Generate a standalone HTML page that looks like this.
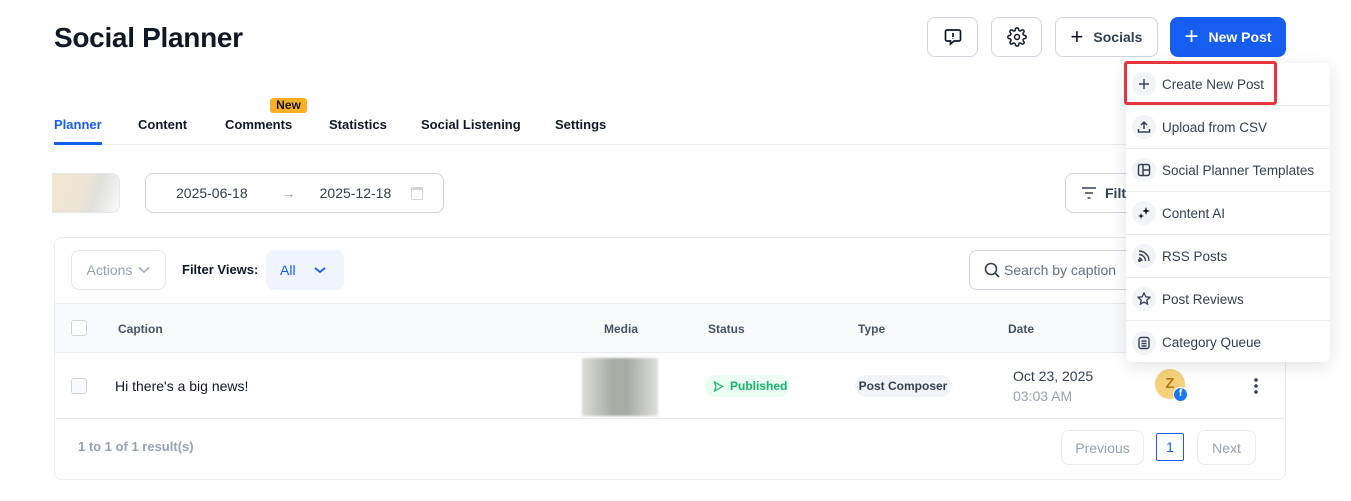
<!DOCTYPE html>
<html><head><style>
*{box-sizing:border-box;margin:0;padding:0}
body{width:1351px;height:501px;background:#fff;font-family:"Liberation Sans",sans-serif;color:#101828;position:relative;overflow:hidden}
.a{position:absolute}
.btn{position:absolute;border:1px solid #d0d5dd;border-radius:8px;background:#fff;display:flex;align-items:center;justify-content:center}
.tab{position:absolute;top:117px;font-size:13px;font-weight:bold;color:#101828}
.th{position:absolute;top:322px;font-size:12px;font-weight:bold;color:#475467}
.mi{position:absolute;left:1126px;width:204px;height:43px;display:flex;align-items:center;font-size:13.5px;color:#344054;border-bottom:1px solid #eaecf0}
.ic{width:24px;height:24px;border-radius:12px;background:#f2f4f7;margin:0 6px 0 6px;display:flex;align-items:center;justify-content:center}
</style></head><body>
<div class="a" style="left:54px;top:22px;font-size:28px;font-weight:bold;color:#101828;letter-spacing:-0.3px">Social Planner</div>

<div class="btn" style="left:927px;top:17px;width:51px;height:40px"><svg width="20" height="20" viewBox="0 0 20 20" fill="none" stroke="#101828" stroke-width="1.7"><path d="M4 3h12a1.5 1.5 0 0 1 1.5 1.5v8A1.5 1.5 0 0 1 16 14h-5l-3.5 3v-3H4a1.5 1.5 0 0 1-1.5-1.5v-8A1.5 1.5 0 0 1 4 3z"/><path d="M10 6v4M10 11.5v.5"/></svg></div>
<div class="btn" style="left:991px;top:17px;width:51px;height:40px"><svg width="20" height="20" viewBox="0 0 24 24" fill="none" stroke="#101828" stroke-width="1.8"><circle cx="12" cy="12" r="3"/><path d="M19.4 15a1.7 1.7 0 0 0 .3 1.8l.1.1a2 2 0 1 1-2.8 2.8l-.1-.1a1.7 1.7 0 0 0-1.8-.3 1.7 1.7 0 0 0-1 1.5V21a2 2 0 1 1-4 0v-.1a1.7 1.7 0 0 0-1.1-1.5 1.7 1.7 0 0 0-1.8.3l-.1.1a2 2 0 1 1-2.8-2.8l.1-.1a1.7 1.7 0 0 0 .3-1.8 1.7 1.7 0 0 0-1.5-1H3a2 2 0 1 1 0-4h.1a1.7 1.7 0 0 0 1.5-1.1 1.7 1.7 0 0 0-.3-1.8l-.1-.1a2 2 0 1 1 2.8-2.8l.1.1a1.7 1.7 0 0 0 1.8.3H9a1.7 1.7 0 0 0 1-1.5V3a2 2 0 1 1 4 0v.1a1.7 1.7 0 0 0 1 1.5 1.7 1.7 0 0 0 1.8-.3l.1-.1a2 2 0 1 1 2.8 2.8l-.1.1a1.7 1.7 0 0 0-.3 1.8V9a1.7 1.7 0 0 0 1.5 1H21a2 2 0 1 1 0 4h-.1a1.7 1.7 0 0 0-1.5 1z"/></svg></div>
<div class="btn" style="left:1055px;top:17px;width:103px;height:40px;font-size:14px;font-weight:bold;color:#344054"><span style="font-size:22px;font-weight:normal;margin-right:10px;color:#101828">+</span>Socials</div>
<div class="btn" style="left:1170px;top:17px;width:116px;height:40px;background:#155eef;border-color:#155eef;color:#fff;font-size:14px;font-weight:bold"><span style="font-size:24px;font-weight:normal;margin-right:10px">+</span>New Post</div>

<div class="a" style="left:270px;top:98px;width:37px;height:15px;background:#fdb022;border-radius:3px;font-size:12px;font-weight:bold;text-align:center;line-height:15px;color:#101828">New</div>
<div class="tab" style="left:54px;color:#155eef">Planner</div>
<div class="tab" style="left:138px">Content</div>
<div class="tab" style="left:225px">Comments</div>
<div class="tab" style="left:329px">Statistics</div>
<div class="tab" style="left:421px">Social Listening</div>
<div class="tab" style="left:555px">Settings</div>
<div class="a" style="left:54px;top:144px;width:1232px;height:1px;background:#eaecf0"></div>
<div class="a" style="left:54px;top:142px;width:48px;height:3px;background:#155eef"></div>

<div class="a" style="left:52px;top:173px;width:68px;height:40px;border-radius:0 8px 8px 0;border:1px solid #e4e7ec;border-left:none;background:linear-gradient(110deg,#f2e6cf 0%,#ece4d5 45%,#e0e0dc 65%,#fafafa 100%)"></div>
<div class="btn" style="left:145px;top:173px;width:299px;height:40px;justify-content:flex-start;font-size:14px;color:#344054"><span style="margin-left:30px">2025-06-18</span><span style="margin-left:34px;color:#98a2b3">→</span><span style="margin-left:24px">2025-12-18</span><span style="margin-left:20px;width:12px;height:13px;border:1.5px solid #d0d5dd;border-radius:2px;border-top-width:3px"></span></div>
<div class="btn" style="left:1065px;top:173px;width:80px;height:40px;justify-content:flex-start;font-size:14px;font-weight:bold;color:#344054"><svg style="margin:0 8px 0 15px" width="16" height="12" viewBox="0 0 16 12"><path d="M1 1h14M4 6h8M6.5 11h3" stroke="#344054" stroke-width="1.6"/></svg>Filte</div>

<div class="a" style="left:54px;top:237px;width:1232px;height:243px;border:1px solid #eaecf0;border-radius:8px"></div>
<div class="btn" style="left:71px;top:250px;width:95px;height:40px;font-size:14px;color:#98a2b3;border-color:#e4e7ec">Actions<svg style="margin-left:6px" width="12" height="8" viewBox="0 0 12 8"><path d="M1 1.5l5 4.5 5-4.5" fill="none" stroke="#98a2b3" stroke-width="1.5"/></svg></div>
<div class="a" style="left:182px;top:262px;font-size:13px;font-weight:bold">Filter Views:</div>
<div class="a" style="left:266px;top:250px;width:78px;height:40px;border-radius:8px;background:#eff4ff;font-size:14px;color:#155eef;padding:12px 0 0 14px">All<svg style="position:absolute;left:48px;top:15px" width="12" height="10" viewBox="0 0 12 10"><path d="M1 3l5 4 5-4" fill="none" stroke="#155eef" stroke-width="1.8"/></svg></div>
<div class="btn" style="left:969px;top:250px;width:200px;height:40px;justify-content:flex-start;font-size:14px;color:#667085"><svg style="margin:0 4px 0 14px" width="16" height="16" viewBox="0 0 16 16" fill="none" stroke="#344054" stroke-width="1.6"><circle cx="7" cy="7" r="5.5"/><path d="M11 11l4 4"/></svg>Search by caption</div>

<div class="a" style="left:55px;top:303px;width:1230px;height:50px;background:#f9fafb;border-top:1px solid #eaecf0;border-bottom:1px solid #eaecf0"></div>
<div class="a" style="left:71px;top:320px;width:16px;height:16px;border:1px solid #d0d5dd;border-radius:3px;background:#fff"></div>
<div class="th" style="left:118px">Caption</div>
<div class="th" style="left:604px">Media</div>
<div class="th" style="left:708px">Status</div>
<div class="th" style="left:858px">Type</div>
<div class="th" style="left:1008px">Date</div>

<div class="a" style="left:71px;top:378px;width:16px;height:16px;border:1px solid #d0d5dd;border-radius:3px;background:#f9fafb"></div>
<div class="a" style="left:115px;top:378px;font-size:14px">Hi there's a big news!</div>
<div class="a" style="left:582px;top:358px;width:76px;height:58px;background:linear-gradient(90deg,#dcdcd8,#a6ada4 40%,#a8aca6 60%,#dedede);filter:blur(1px)"></div>
<div class="a" style="left:705px;top:375px;width:85px;height:22px;border-radius:11px;background:#ecfdf3;color:#12b76a;font-size:12px;font-weight:bold;line-height:22px;padding-left:25px">Published<svg style="position:absolute;left:8px;top:6px" width="11" height="11" viewBox="0 0 11 11"><path d="M1.5 1l8 4.5-8 4.5 1.5-4.5z" fill="none" stroke="#12b76a" stroke-width="1.2"/></svg></div>
<div class="a" style="left:855px;top:375px;width:96px;height:22px;border-radius:11px;background:#f2f4f7;font-size:12px;font-weight:bold;line-height:22px;text-align:center;color:#344054">Post Composer</div>
<div class="a" style="left:1013px;top:368px;font-size:14px;color:#344054">Oct 23, 2025</div>
<div class="a" style="left:1013px;top:388px;font-size:14px;color:#98a2b3">03:03 AM</div>
<div class="a" style="left:1155px;top:369px;width:30px;height:30px;border-radius:15px;background:#f5d27a;color:#b7791f;font-weight:bold;font-size:15px;text-align:center;line-height:30px">Z</div>
<div class="a" style="left:1173px;top:387px;width:15px;height:15px;border-radius:8px;background:#1877f2;border:1.5px solid #fff;color:#fff;font-size:10px;font-weight:bold;text-align:center;line-height:12px">f</div>
<div class="a" style="left:1254px;top:377px;width:4px;height:18px;background:radial-gradient(circle,#344054 1.6px,transparent 2px) 0 0/4px 6px"></div>

<div class="a" style="left:55px;top:418px;width:1230px;height:1px;background:#eaecf0"></div>
<div class="a" style="left:78px;top:439px;font-size:13px;font-weight:bold;color:#98a2b3">1 to 1 of 1 result(s)</div>
<div class="btn" style="left:1061px;top:430px;width:83px;height:35px;font-size:14px;color:#98a2b3;border-color:#eaecf0">Previous</div>
<div class="btn" style="left:1156px;top:433px;width:28px;height:28px;border-radius:2px;border-color:#155eef;font-size:14px;color:#155eef">1</div>
<div class="btn" style="left:1197px;top:430px;width:59px;height:35px;font-size:14px;color:#98a2b3;border-color:#eaecf0">Next</div>

<div class="a" style="left:1126px;top:63px;width:204px;height:299px;background:#fff;border-radius:6px;box-shadow:0 4px 16px rgba(16,24,40,.12)"></div>
<div class="mi" style="top:63px">
<div class="ic"><svg width="12" height="12" viewBox="0 0 12 12"><path d="M6 1v10M1 6h10" stroke="#344054" stroke-width="1.4"/></svg></div>Create New Post</div>
<div class="a" style="left:1124px;top:61px;width:153px;height:44px;border:3px solid #e5363d;border-radius:3px"></div>
<div class="mi" style="top:106px"><div class="ic"><svg width="14" height="14" viewBox="0 0 14 14" fill="none" stroke="#344054" stroke-width="1.5"><path d="M7 9V2M4 5l3-3 3 3M1.5 9v3h11V9"/></svg></div>Upload from CSV</div>
<div class="mi" style="top:149px"><div class="ic"><svg width="14" height="14" viewBox="0 0 14 14" fill="none" stroke="#344054" stroke-width="1.5"><rect x="1.5" y="1.5" width="11" height="11" rx="2"/><path d="M6 1.5v11M6 7h6.5"/></svg></div>Social Planner Templates</div>
<div class="mi" style="top:192px"><div class="ic"><svg width="14" height="14" viewBox="0 0 14 14" fill="#101828"><path d="M9 1l1 3 3 1-3 1-1 3-1-3-3-1 3-1zM4 7l.8 2.2L7 10l-2.2.8L4 13l-.8-2.2L1 10l2.2-.8z"/></svg></div>Content AI</div>
<div class="mi" style="top:235px"><div class="ic"><svg width="14" height="14" viewBox="0 0 14 14" fill="none" stroke="#344054" stroke-width="1.4"><path d="M2 2a10 10 0 0 1 10 10M2 5.5A6.5 6.5 0 0 1 8.5 12M2 9a3 3 0 0 1 3 3"/><circle cx="2.5" cy="11.5" r=".8" fill="#344054"/></svg></div>RSS Posts</div>
<div class="mi" style="top:278px"><div class="ic"><svg width="14" height="14" viewBox="0 0 14 14" fill="none" stroke="#344054" stroke-width="1.3"><path d="M7 1l1.8 3.8 4 .5-3 2.8.8 4L7 10.1 3.4 12.1l.8-4-3-2.8 4-.5z"/></svg></div>Post Reviews</div>
<div class="mi" style="top:321px;border-bottom:none"><div class="ic"><svg width="14" height="14" viewBox="0 0 14 14" fill="none" stroke="#344054" stroke-width="1.4"><rect x="2" y="1.5" width="10" height="11" rx="2"/><path d="M4.5 5h5M4.5 7.5h5M4.5 10h5"/></svg></div>Category Queue</div>
</body></html>
